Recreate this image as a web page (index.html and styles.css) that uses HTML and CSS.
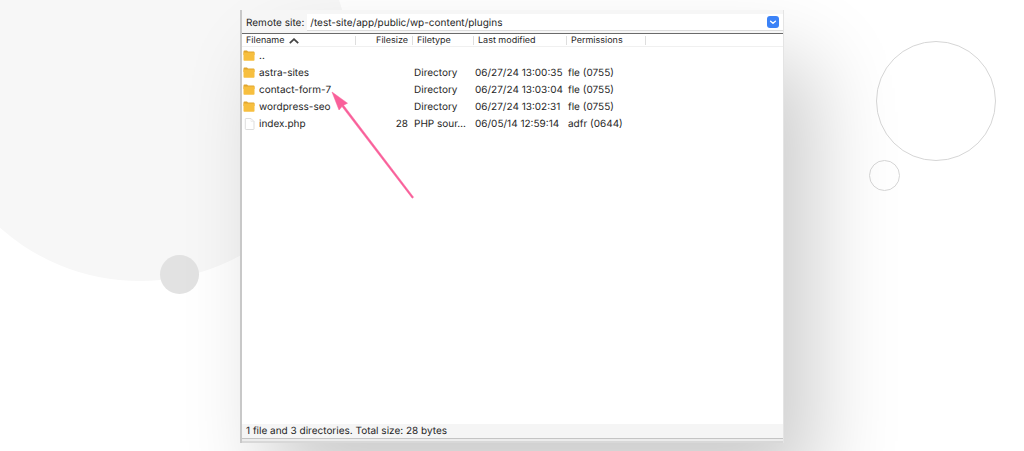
FILE: index.html
```html
<!DOCTYPE html>
<html lang="en">
<head>
<meta charset="utf-8">
<meta name="viewport" content="width=device-width, initial-scale=1">
<title>Remote site</title>
<link rel="stylesheet" href="styles.css">
</head>
<body>
<div class="stage">
  <div class="bubble bubble-large"></div>
  <div class="bubble bubble-dot"></div>
  <div class="bubble ring ring-large"></div>
  <div class="bubble ring ring-small"></div>

  <main class="panel">
    <form class="address">
      <label class="address-label" for="path">Remote site:</label>
      <div class="combo">
        <input class="combo-input" id="path" type="text" value="/test-site/app/public/wp-content/plugins" spellcheck="false">
        <button class="combo-button" type="button" aria-label="Recent folders">
          <svg class="combo-icon" viewBox="0 0 12 12"><path d="M3.6 5.2 6 7.2 8.4 5.2" fill="none" stroke="#fff" stroke-width="1.4" stroke-linecap="round" stroke-linejoin="round"/></svg>
        </button>
      </div>
    </form>

    <div class="listing">
      <table class="files">
        <colgroup>
          <col class="col-name"><col class="col-size"><col class="col-type"><col class="col-date"><col class="col-perm"><col>
        </colgroup>
        <thead>
          <tr>
            <th aria-sort="ascending"><span class="entry head-name">Filename <svg class="sort" viewBox="0 0 10 6"><path d="M.8 5.2 5 1.2 9.2 5.2" fill="none" stroke="#444" stroke-width="1.8"/></svg></span></th>
            <th class="number">Filesize</th>
            <th>Filetype</th>
            <th>Last modified</th>
            <th>Permissions</th>
            <th class="filler"></th>
          </tr>
        </thead>
        <tbody>
          <tr>
            <td><span class="entry"><svg class="icon" viewBox="0 0 12 12"><path d="M.5 1.6Q.5.6 1.5.6H4l1 1h5.6q.9 0 .9.9V5H.5z" fill="#e0a52f"/><path d="M.5 2.6h11v7.5q0 .7-.7.7H1.2q-.7 0-.7-.7z" fill="#f7bf3f"/></svg>..</span></td>
            <td></td><td></td><td></td><td></td><td></td>
          </tr>
          <tr>
            <td><span class="entry"><svg class="icon" viewBox="0 0 12 12"><path d="M.5 1.6Q.5.6 1.5.6H4l1 1h5.6q.9 0 .9.9V5H.5z" fill="#e0a52f"/><path d="M.5 2.6h11v7.5q0 .7-.7.7H1.2q-.7 0-.7-.7z" fill="#f7bf3f"/></svg>astra-sites</span></td>
            <td></td><td>Directory</td><td>06/27/24 13:00:35</td><td>fle (0755)</td><td></td>
          </tr>
          <tr>
            <td><span class="entry"><svg class="icon" viewBox="0 0 12 12"><path d="M.5 1.6Q.5.6 1.5.6H4l1 1h5.6q.9 0 .9.9V5H.5z" fill="#e0a52f"/><path d="M.5 2.6h11v7.5q0 .7-.7.7H1.2q-.7 0-.7-.7z" fill="#f7bf3f"/></svg><span class="pointed">contact-form-7<svg class="arrow" viewBox="0 0 84 108" aria-hidden="true"><path d="M1 1 16.5 12.2 12.6 14.2 82.6 106.2 81.2 107.2 11 15.6 8 19z" fill="#f9609a" stroke="#f9609a" stroke-width=".5"/></svg></span></span></td>
            <td></td><td>Directory</td><td>06/27/24 13:03:04</td><td>fle (0755)</td><td></td>
          </tr>
          <tr>
            <td><span class="entry"><svg class="icon" viewBox="0 0 12 12"><path d="M.5 1.6Q.5.6 1.5.6H4l1 1h5.6q.9 0 .9.9V5H.5z" fill="#e0a52f"/><path d="M.5 2.6h11v7.5q0 .7-.7.7H1.2q-.7 0-.7-.7z" fill="#f7bf3f"/></svg>wordpress-seo</span></td>
            <td></td><td>Directory</td><td>06/27/24 13:02:31</td><td>fle (0755)</td><td></td>
          </tr>
          <tr>
            <td><span class="entry"><svg class="icon" viewBox="0 0 12 12"><path d="M3 .5h5L11 3.5v7.1q0 .9-.9.9H3.2q-.9 0-.9-.9V1.2Q2.3.5 3 .5z" fill="#fff" stroke="#d4d4d4" stroke-width=".8"/><path d="M8 .6V3.5h3" fill="none" stroke="#dedede" stroke-width=".5"/></svg>index.php</span></td>
            <td class="number">28</td><td>PHP sour…</td><td>06/05/14 12:59:14</td><td>adfr (0644)</td><td></td>
          </tr>
        </tbody>
      </table>
    </div>

    <footer class="status">1 file and 3 directories. Total size: 28 bytes</footer>
    <div class="sash"></div>
  </main>
</div>
</body>
</html>
```
FILE: styles.css
```css
* {
  box-sizing: border-box;
}

body {
  margin: 0;
  background: #fff;
  color: #262626;
  font-family: Inter, "Liberation Sans", sans-serif;
  font-size: 10px;
  line-height: 14px;
  text-rendering: geometricPrecision;
}

.stage {
  position: relative;
  display: flex;
  justify-content: center;
  min-height: 100vh;
  padding: 10px 0 8px;
  overflow: hidden;
}

/* Decorative backdrop */
.bubble {
  position: absolute;
  border-radius: 50%;
}

.bubble-large {
  top: -141px;
  left: -71px;
  width: 422px;
  height: 422px;
  background: #f7f7f7;
}

.bubble-dot {
  top: 255px;
  left: 160px;
  width: 39px;
  height: 39px;
  background: #e2e2e2;
}

.ring {
  border: 1px solid #d6d6d6;
}

.ring-large {
  top: 41px;
  right: 28px;
  width: 120px;
  height: 120px;
}

.ring-small {
  top: 160px;
  right: 124px;
  width: 31px;
  height: 31px;
}

/* Remote site window */
.panel {
  position: relative;
  display: flex;
  flex-direction: column;
  width: 53.125%;
  min-width: 480px;
  background: #fff;
  border-left: 2px solid #c8c8c8;
  border-right: 1px solid #e4e4e4;
  box-shadow: 30px 50px 80px rgba(0, 0, 0, 0.2);
}

.address {
  display: flex;
  align-items: center;
  gap: 3px;
  height: 24px;
  padding: 2px 0 0 4px;
  background: #f6f6f6;
  border-bottom: 1px solid #6a6a6a;
}

.combo {
  display: flex;
  flex: 1;
  align-items: center;
  height: 17px;
  padding-right: 4px;
  background: #fff;
  border-bottom: 1px solid #dcdcdc;
}

.combo-input {
  flex: 1;
  min-width: 0;
  height: 16px;
  padding: 1px 3px 0;
  border: 0;
  outline: 0;
  background: transparent;
  color: inherit;
  font: inherit;
  text-rendering: inherit;
}

.combo-button {
  display: flex;
  width: 12px;
  height: 12px;
  padding: 0;
  border: 0;
  border-radius: 3px;
  background: #3b82f7;
}

.combo-icon {
  width: 12px;
  height: 12px;
}

.listing {
  flex: 1;
}

.files {
  width: 100%;
  border-spacing: 0;
  table-layout: fixed;
}

.col-name { width: 114px; }
.col-size { width: 57px; }
.col-type { width: 61px; }
.col-date { width: 93px; }
.col-perm { width: 79px; }

.files th {
  height: 13px;
  padding: 2px 4px 0;
  border-bottom: 1px solid #f0f0f0;
  background: linear-gradient(#dedede, #dedede) right center / 1px 9px no-repeat;
  font-size: 9px;
  font-weight: 400;
  line-height: 10px;
  text-align: left;
  white-space: nowrap;
}

.files th.filler {
  background: none;
}

.files td {
  height: 17px;
  padding: 0 0 0 1px;
  white-space: nowrap;
}

.files .number {
  padding-right: 5px;
  text-align: right;
}

.entry {
  display: flex;
  align-items: center;
  gap: 4px;
}

.head-name {
  gap: 5px;
}

.sort {
  width: 10px;
  height: 6px;
}

.icon {
  width: 12px;
  height: 12px;
}

.pointed {
  position: relative;
}

.arrow {
  position: absolute;
  top: 8px;
  left: 100%;
  width: 84px;
  height: 108px;
  pointer-events: none;
}

.status {
  padding: 0 4px;
  background: #f5f5f5;
}

.sash {
  height: 5px;
  background: #ececec;
  border-top: 1px solid #c4c4c4;
  border-bottom: 2px solid #d8d8d8;
}
```
